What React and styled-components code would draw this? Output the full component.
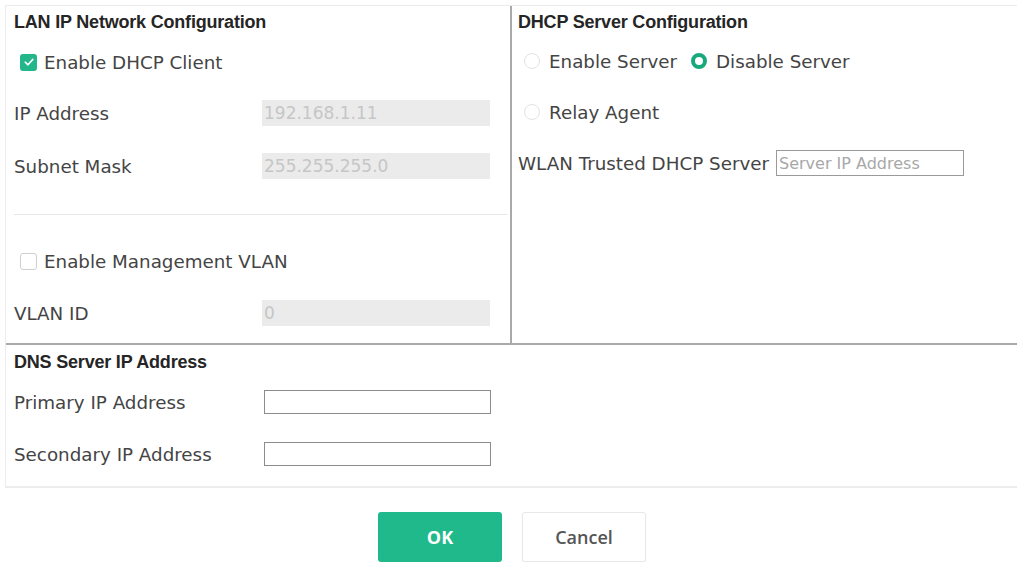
import React from "react";
import styled, { createGlobalStyle } from "styled-components";

const Global = createGlobalStyle`
  html, body { margin: 0; padding: 0; background: #fff; }
  body { font-family: "DejaVu Sans", Verdana, sans-serif; color: #444; }
`;

const Page = styled.div`
  width: 1017px;
  height: 562px;
  padding: 5px 0 0 5px;
  box-sizing: border-box;
  display: flex;
  flex-direction: column;
`;

const Panel = styled.div`
  width: 1012px;
  border: 1px solid #ececec;
  border-right: none;
  box-sizing: border-box;
  display: flex;
  flex-direction: column;
`;

const TopArea = styled.div`
  display: grid;
  grid-template-columns: 506px 1fr;
  height: 337px;
  border-bottom: 2px solid #a9a9a9;
`;

const Column = styled.div`
  display: flex;
  flex-direction: column;
  padding-left: ${(p) => p.$pl}px;
  ${(p) => (p.$divider ? "border-right: 2px solid #a9a9a9;" : "")}
`;

const Heading = styled.div`
  font-family: "Liberation Sans", Arial, sans-serif;
  font-weight: 700;
  font-size: 18px;
  letter-spacing: -0.2px;
  color: #252525;
  height: ${(p) => p.$h}px;
  display: flex;
  align-items: center;
`;

const Row = styled.div`
  height: ${(p) => p.$h}px;
  display: flex;
  align-items: center;
  padding-left: ${(p) => p.$pl || 0}px;
  font-size: 18.3px;
  color: #444;
`;

const FieldRow = styled.div`
  height: ${(p) => p.$h}px;
  margin-top: ${(p) => p.$mt || 0}px;
  display: grid;
  grid-template-columns: ${(p) => p.$labelW}px ${(p) => p.$inputW}px;
  align-items: center;
  font-size: 18.3px;
  color: #444;
`;

const Label = styled.span`
  white-space: nowrap;
`;

const Input = styled.div`
  height: ${(p) => p.$h}px;
  box-sizing: border-box;
  background: ${(p) => (p.$disabled ? "#ebebeb" : "#fff")};
  border: ${(p) => (p.$disabled ? "none" : "1px solid #8c8c8c")};
  font-size: 17px;
  color: #c6c6c6;
  display: flex;
  align-items: center;
  padding-left: 2px;
  white-space: nowrap;
  overflow: hidden;
`;

const Divider = styled.div`
  height: 44px;
  display: flex;
  align-items: center;
  padding-right: 3px;
  &::after {
    content: "";
    flex: 1;
    height: 1px;
    background: #e6e6e6;
  }
`;

const CheckBox = styled.span`
  width: 17px;
  height: 17px;
  box-sizing: border-box;
  border-radius: 3px;
  margin-right: 7px;
  display: inline-flex;
  align-items: center;
  justify-content: center;
  flex: none;
  background: ${(p) => (p.$checked ? "#22b68a" : "#fff")};
  border: ${(p) => (p.$checked ? "none" : "1px solid #cfcfcf")};
`;

const Radio = styled.span`
  width: 16px;
  height: 16px;
  box-sizing: border-box;
  border-radius: 50%;
  margin-right: 9px;
  flex: none;
  background: #fff;
  border: ${(p) => (p.$checked ? "4px solid #17a97b" : "1px solid #e3e3e3")};
  margin-left: ${(p) => p.$ml || 0}px;
`;

const TextInputRow = styled.div`
  height: ${(p) => p.$h}px;
  display: flex;
  align-items: center;
  font-size: 18.3px;
  color: #444;
`;

const SmallInput = styled.div`
  width: 188px;
  height: 26px;
  margin-left: 7px;
  box-sizing: border-box;
  border: 1px solid #9a9a9a;
  font-size: 16px;
  color: #a8a8a8;
  display: flex;
  align-items: center;
  padding-left: 2px;
  white-space: nowrap;
`;

const DnsSection = styled.div`
  display: flex;
  flex-direction: column;
  padding: 0 0 9px 8px;
  border-bottom: 1px solid #ececec;
`;

const Buttons = styled.div`
  display: flex;
  gap: 20px;
  padding-left: 373px;
  margin-top: 24px;
`;

const Button = styled.button`
  width: 124px;
  height: 50px;
  border-radius: 3px;
  font-family: "Open Sans", "Liberation Sans", sans-serif;
  font-size: 18px;
  font-weight: ${(p) => (p.$primary ? 700 : 600)};
  color: ${(p) => (p.$primary ? "#fff" : "#555")};
  background: ${(p) => (p.$primary ? "#1fb98c" : "#fff")};
  border: ${(p) => (p.$primary ? "none" : "1px solid #e8e8e8")};
  box-shadow: ${(p) => (p.$primary ? "none" : "0 1px 2px rgba(0,0,0,0.06)")};
  cursor: pointer;
`;

const Check = () => (
  <svg width="12" height="12" viewBox="0 0 12 12">
    <path d="M2.2 6.2 L5 8.8 L9.8 3.4" fill="none" stroke="#fff" strokeWidth="1.6" strokeLinecap="round" strokeLinejoin="round" />
  </svg>
);

export default function App() {
  return (
    <>
      <Global />
      <Page>
        <Panel>
          <TopArea>
            <Column $divider $pl={8}>
              <Heading $h={32}>LAN IP Network Configuration</Heading>
              <Row $h={48} $pl={6}>
                <CheckBox $checked>
                  <Check />
                </CheckBox>
                Enable DHCP Client
              </Row>
              <FieldRow $h={54} $labelW={248} $inputW={228}>
                <Label>IP Address</Label>
                <Input $disabled $h={26}>192.168.1.11</Input>
              </FieldRow>
              <FieldRow $h={52} $labelW={248} $inputW={228}>
                <Label>Subnet Mask</Label>
                <Input $disabled $h={26}>255.255.255.0</Input>
              </FieldRow>
              <Divider />
              <Row $h={50} $pl={6}>
                <CheckBox />
                Enable Management VLAN
              </Row>
              <FieldRow $h={54} $labelW={248} $inputW={228}>
                <Label>VLAN ID</Label>
                <Input $disabled $h={26}>0</Input>
              </FieldRow>
            </Column>
            <Column $pl={6}>
              <Heading $h={32}>DHCP Server Configuration</Heading>
              <Row $h={46} $pl={6}>
                <Radio />
                Enable Server
                <Radio $checked $ml={14} />
                Disable Server
              </Row>
              <Row $h={56} $pl={6}>
                <Radio />
                Relay Agent
              </Row>
              <TextInputRow $h={46}>
                WLAN Trusted DHCP Server
                <SmallInput>Server IP Address</SmallInput>
              </TextInputRow>
            </Column>
          </TopArea>
          <DnsSection>
            <Heading $h={34}>DNS Server IP Address</Heading>
            <FieldRow $h={46} $labelW={250} $inputW={227}>
              <Label>Primary IP Address</Label>
              <Input $h={24} />
            </FieldRow>
            <FieldRow $h={46} $mt={6} $labelW={250} $inputW={227}>
              <Label>Secondary IP Address</Label>
              <Input $h={24} />
            </FieldRow>
          </DnsSection>
        </Panel>
        <Buttons>
          <Button $primary>OK</Button>
          <Button>Cancel</Button>
        </Buttons>
      </Page>
    </>
  );
}
